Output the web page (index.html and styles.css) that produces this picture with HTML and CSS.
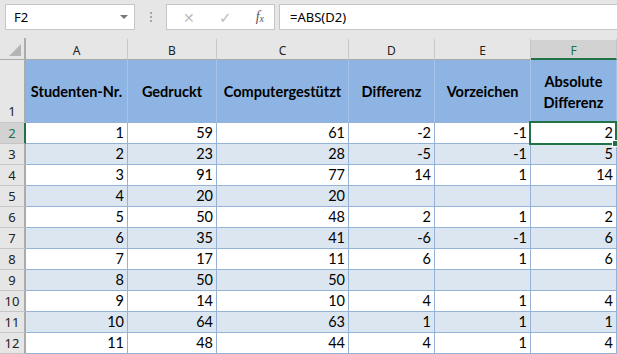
FILE: index.html
```html
<!DOCTYPE html>
<html lang="de">
<head>
    <meta charset="UTF-8">
    <title>Absolute Differenz</title>
    <link rel="stylesheet" href="styles.css">
</head>
<body>
    <div class="toolbar">
        <div class="namebox">
            <span>F2</span>
            <span class="arrow"></span>
        </div>
        <div class="dots"><i></i><i></i><i></i></div>
        <div class="actions">
            <span class="act">&#x2715;</span>
            <span class="act check">&#x2713;</span>
            <span class="fx">f<sub>x</sub></span>
        </div>
        <div class="formula">=ABS(D2)</div>
    </div>

    <div class="sheet">
        <!-- column headers -->
        <div class="corner"><span class="tri"></span></div>
        <div class="colhead">A</div>
        <div class="colhead">B</div>
        <div class="colhead">C</div>
        <div class="colhead">D</div>
        <div class="colhead">E</div>
        <div class="colhead active">F</div>

        <!-- row 1: table header -->
        <div class="rowhead tall">1</div>
        <div class="th">Studenten-Nr.</div>
        <div class="th">Gedruckt</div>
        <div class="th">Computergestützt</div>
        <div class="th">Differenz</div>
        <div class="th">Vorzeichen</div>
        <div class="th wrap">Absolute<br>Differenz</div>

        <div class="rowhead active">2</div>
        <div class="td">1</div><div class="td">59</div><div class="td">61</div><div class="td">-2</div><div class="td">-1</div><div class="td selected">2</div>

        <div class="rowhead">3</div>
        <div class="td band">2</div><div class="td band">23</div><div class="td band">28</div><div class="td band">-5</div><div class="td band">-1</div><div class="td band">5</div>

        <div class="rowhead">4</div>
        <div class="td">3</div><div class="td">91</div><div class="td">77</div><div class="td">14</div><div class="td">1</div><div class="td">14</div>

        <div class="rowhead">5</div>
        <div class="td band">4</div><div class="td band">20</div><div class="td band">20</div><div class="td band"></div><div class="td band"></div><div class="td band"></div>

        <div class="rowhead">6</div>
        <div class="td">5</div><div class="td">50</div><div class="td">48</div><div class="td">2</div><div class="td">1</div><div class="td">2</div>

        <div class="rowhead">7</div>
        <div class="td band">6</div><div class="td band">35</div><div class="td band">41</div><div class="td band">-6</div><div class="td band">-1</div><div class="td band">6</div>

        <div class="rowhead">8</div>
        <div class="td">7</div><div class="td">17</div><div class="td">11</div><div class="td">6</div><div class="td">1</div><div class="td">6</div>

        <div class="rowhead">9</div>
        <div class="td band">8</div><div class="td band">50</div><div class="td band">50</div><div class="td band"></div><div class="td band"></div><div class="td band"></div>

        <div class="rowhead">10</div>
        <div class="td">9</div><div class="td">14</div><div class="td">10</div><div class="td">4</div><div class="td">1</div><div class="td">4</div>

        <div class="rowhead">11</div>
        <div class="td band">10</div><div class="td band">64</div><div class="td band">63</div><div class="td band">1</div><div class="td band">1</div><div class="td band">1</div>

        <div class="rowhead">12</div>
        <div class="td">11</div><div class="td">48</div><div class="td">44</div><div class="td">4</div><div class="td">1</div><div class="td">4</div>
    </div>
</body>
</html>
```

FILE: styles.css
```css
/* Base */
body {
    margin: 0;
    width: 617px;
    height: 354px;
    overflow: hidden;
    background-color: #e6e6e6;
    font-family: "Noto Sans", "DejaVu Sans", sans-serif;
    color: #000;
}

/* Formula bar */
.toolbar {
    display: flex;
    align-items: stretch;
    height: 38px;
    padding: 4px 0 0 5px;
    box-sizing: border-box;
}

.namebox,
.actions,
.formula {
    height: 26px;
    box-sizing: border-box;
    background-color: #fff;
    border: 1px solid #c6c6c6;
    display: flex;
    align-items: center;
    font-size: 13px;
}

.namebox {
    width: 130px;
    padding: 0 6px 0 8px;
    justify-content: space-between;
}

.arrow {
    width: 0;
    height: 0;
    border-left: 4px solid transparent;
    border-right: 4px solid transparent;
    border-top: 4px solid #777;
}

.dots {
    width: 31px;
    display: flex;
    flex-direction: column;
    align-items: center;
    justify-content: center;
    gap: 2px;
    height: 26px;
}

.dots i {
    display: block;
    width: 2px;
    height: 2px;
    background-color: #a6a6a6;
}

.actions {
    width: 109px;
    padding: 0 10px 0 16px;
    justify-content: space-between;
}

.act {
    color: #bdbdbd;
    font-size: 14px;
}

.check {
    font-size: 15px;
    font-weight: bold;
}

.fx {
    font-family: "Liberation Serif", serif;
    font-style: italic;
    font-size: 14px;
    color: #555;
}

.fx sub {
    font-size: 10px;
    vertical-align: -1px;
}

.formula {
    flex: 1;
    margin-left: 4px;
    padding-left: 10px;
    border-right: none;
}

/* Grid */
.sheet {
    display: grid;
    grid-template-columns: 26px 102px 89px 132px 86px 96px 86px;
    grid-template-rows: 22px 63px repeat(11, 21px);
}

.sheet > div {
    box-sizing: border-box;
}

.corner {
    position: relative;
    border-right: 2px solid #ababab;
    border-bottom: 1px solid #ababab;
}

.tri {
    position: absolute;
    right: 3px;
    bottom: 3px;
    width: 0;
    height: 0;
    border-left: 12px solid transparent;
    border-bottom: 12px solid #b4b4b4;
}

.colhead {
    border-right: 1px solid #c6c6c6;
    border-bottom: 1px solid #ababab;
    font-size: 12px;
    text-align: center;
    line-height: 21px;
    color: #222;
    border-top: 2px solid #e6e6e6;
}

.colhead.active {
    background-color: #d2d2d2;
    color: #217346;
    border-bottom: 2px solid #217346;
}

.rowhead {
    border-right: 2px solid #ababab;
    border-bottom: 1px solid #c6c6c6;
    font-size: 13px;
    text-align: center;
    line-height: 20px;
    color: #222;
}

.rowhead.tall {
    display: flex;
    align-items: flex-end;
    justify-content: center;
    padding-bottom: 1px;
}

.rowhead.active {
    background-color: #d2d2d2;
    color: #217346;
    border-right-color: #217346;
}

/* Table header row */
.th {
    background-color: #8db4e2;
    border-right: 1px solid #a6c3e8;
    border-bottom: 1px solid #95b3d7;
    font-family: Lato, "Open Sans", sans-serif;
    font-weight: bold;
    font-size: 14.5px;
    display: flex;
    align-items: center;
    justify-content: center;
    text-align: center;
    padding-top: 1px;
}

.th.wrap {
    line-height: 21px;
}

/* Data cells */
.td {
    background-color: #fff;
    border-right: 1px solid #95b3d7;
    border-bottom: 1px solid #95b3d7;
    font-family: Lato, "Open Sans", sans-serif;
    font-size: 14.5px;
    text-align: right;
    padding: 0 3px 0 0;
    line-height: 19px;
}

.td.band {
    background-color: #dce6f1;
}

.td.selected {
    position: relative;
}

.td.selected::before {
    content: "";
    position: absolute;
    left: -2px;
    top: -2px;
    right: -1px;
    bottom: -2px;
    border: 2px solid #217346;
}

.td.selected::after {
    content: "";
    position: absolute;
    right: -3px;
    bottom: -4px;
    width: 5px;
    height: 5px;
    background-color: #217346;
    border: 1px solid #fff;
}
```
